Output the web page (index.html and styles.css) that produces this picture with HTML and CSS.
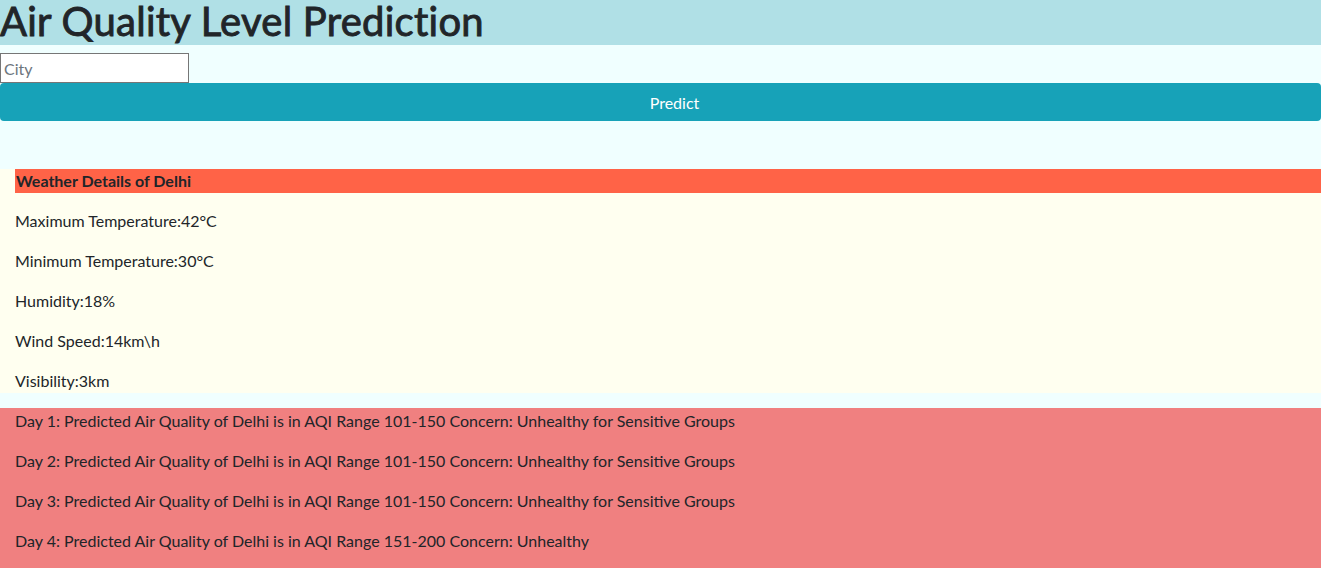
FILE: index.html
```html
<!DOCTYPE html>
<html lang="en">
<head>
<meta charset="utf-8">
<title>Air Quality Level Prediction</title>
<link rel="stylesheet" href="styles.css">
</head>
<body>
<header class="banner">
  <h1 class="title">Air Quality Level Prediction</h1>
</header>
<form class="search">
  <input class="city" type="text" placeholder="City">
  <button class="predict" type="button">Predict</button>
</form>
<section class="weather">
  <h6 class="weather-head">Weather Details of Delhi</h6>
  <p class="line">Maximum Temperature:42°C</p>
  <p class="line">Minimum Temperature:30°C</p>
  <p class="line">Humidity:18%</p>
  <p class="line">Wind Speed:14km\h</p>
  <p class="line">Visibility:3km</p>
</section>
<section class="forecast">
  <p class="line">Day 1: Predicted Air Quality of Delhi is in AQI Range 101-150 Concern: Unhealthy for Sensitive Groups</p>
  <p class="line">Day 2: Predicted Air Quality of Delhi is in AQI Range 101-150 Concern: Unhealthy for Sensitive Groups</p>
  <p class="line">Day 3: Predicted Air Quality of Delhi is in AQI Range 101-150 Concern: Unhealthy for Sensitive Groups</p>
  <p class="line">Day 4: Predicted Air Quality of Delhi is in AQI Range 151-200 Concern: Unhealthy</p>
</section>
</body>
</html>
```
FILE: styles.css
```css
* { box-sizing: border-box; }
html, body { margin: 0; padding: 0; }
body {
  background: #f0ffff;
  color: #212529;
  font-family: "Lato", "Noto Sans", sans-serif;
  font-size: 16px;
  line-height: 24px;
  overflow: hidden;
}
.banner {
  background: #b0e0e6;
  height: 45px;
}
.title {
  margin: 0;
  font-size: 40px;
  line-height: 42px;
  font-weight: 400;
  white-space: nowrap;
  letter-spacing: 0.25px;
  -webkit-text-stroke: 0.9px #212529;
}
.search {
  margin-top: 8px;
  display: flex;
  flex-direction: column;
  align-items: flex-start;
}
.city {
  width: 189px;
  height: 30px;
  margin: 0;
  border: 1px solid #767676;
  padding: 1px 3px;
  font-family: inherit;
  font-size: 16px;
  background: #fff;
  color: #212529;
}
.city::placeholder { color: #6c757d; }
.predict {
  width: 100%;
  height: 38px;
  margin: 0;
  border: 0;
  border-radius: 4px;
  background: #17a2b8;
  color: #fff;
  font-family: inherit;
  font-size: 16px;
  padding: 0 0 0 28px;
}
.weather {
  margin-top: 48px;
  background: #fffff0;
  padding-left: 15px;
  display: flow-root;
}
.weather-head {
  margin: 0;
  background: #ff6347;
  font-size: 16px;
  line-height: 24px;
  font-weight: 700;
  padding-left: 1px;
}
.weather .line { margin: 16px 0 0; }
.forecast {
  margin-top: 15px;
  background: #f08080;
  padding: 1px 15px 0;
  display: flow-root;
  min-height: 160px;
}
.forecast .line { margin: 0 0 16px; }
```
